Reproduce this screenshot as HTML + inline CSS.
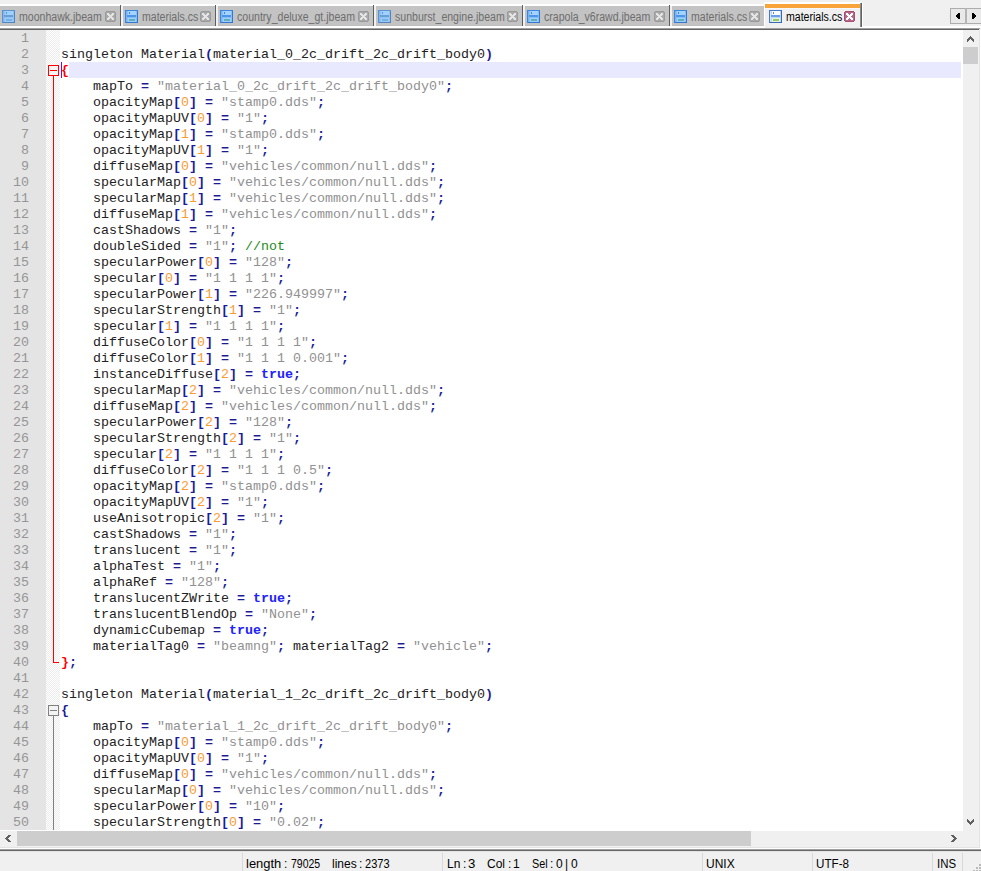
<!DOCTYPE html>
<html><head><meta charset="utf-8">
<style>
*{margin:0;padding:0;box-sizing:border-box}
html,body{width:981px;height:871px;overflow:hidden;background:#f0f0f0;position:relative;font-family:"Liberation Sans",sans-serif}
svg{display:block}
.ic,.cl{position:absolute}
.tt{position:absolute;top:11px;font-size:12px;line-height:13px;color:#6d6d6d;white-space:nowrap;transform:scaleX(0.88);transform-origin:0 0}
.tt.act{color:#000}
#arrows{position:absolute;left:950px;top:8px;width:31px;height:16px}
#editor{position:absolute;left:0;top:30px;width:963px;height:800px;background:#fff;overflow:hidden}
#lnm{position:absolute;left:0;top:0;width:46px;height:800px;background:#e4e4e4}
#lnt{position:absolute;left:0;top:1px;width:29px;font-family:"Liberation Mono",monospace;font-size:13.333px;line-height:16px;color:#969696;text-align:right}
#fold{position:absolute;left:46px;top:0;width:14px;height:800px;background-color:#fff;background-image:conic-gradient(#ececec 25%,#fff 0 50%,#ececec 0 75%,#fff 0);background-size:2px 2px}
#curl{position:absolute;left:69px;top:32px;width:892px;height:16px;background:#e8e8ff}
#caret{position:absolute;left:61px;top:32px;width:1px;height:16px;background:#8000ff}
#code{position:absolute;left:61px;top:1px;width:900px;font-family:"Liberation Mono",monospace;font-size:13.333px;line-height:16px;color:#222;white-space:pre}
.ln{height:16px}
i{font-style:normal}
.o{color:#1c1c96;font-weight:bold}
.s{color:#919191}
.n{color:#ff9a33}
.k{color:#2222ff;font-weight:bold}
.c{color:#1a8c1a}
.b{color:#ff0000;font-weight:bold}
#vsb{position:absolute;left:963px;top:30px;width:16px;height:801px;background:#f0f0f0}
#hsb{position:absolute;left:0;top:831px;width:963px;height:16px;background:#f0f0f0}
#corner{position:absolute;left:963px;top:831px;width:16px;height:16px;background:#f0f0f0}
#status{position:absolute;left:0;top:851px;width:981px;height:20px;background:#f0f0f0;font-size:12px;color:#000}
.sep{position:absolute;top:2px;width:1px;height:18px;background:#d9d9d9}
.st{position:absolute;top:6px;line-height:14px;white-space:pre;transform-origin:0 0}
</style></head><body>
<div id="tabbar">
<div style="position:absolute;left:0px;top:4px;width:764px;height:2px;background:#ffffff;"></div>
<div style="position:absolute;left:0px;top:6px;width:120px;height:20px;background:#c3c3c3;"></div>
<div style="position:absolute;left:0px;top:25px;width:120px;height:1px;background:#bdbdbd;"></div>
<div style="position:absolute;left:120px;top:5px;width:1px;height:21px;background:#5e5e5e;"></div>
<svg class="ic" style="left:2px;top:10px" width="13" height="13" viewBox="0 0 13 13" shape-rendering="crispEdges"><rect x="0" y="0" width="13" height="13" fill="#5a92d2"/><rect x="12" y="1" width="1" height="12" fill="#4e86c4"/><rect x="1" y="12" width="12" height="1" fill="#4e86c4"/><rect x="1" y="1" width="11" height="11" fill="#8fc2f4"/><rect x="1" y="1" width="1" height="11" fill="#80b4ea"/><rect x="3" y="1" width="8" height="4" fill="#a0d0ff"/><rect x="4" y="2" width="1" height="2" fill="#5f95d0"/><rect x="2" y="5" width="9" height="2" fill="#6a9fd2"/><rect x="3" y="8" width="8" height="4" fill="#98ccff"/><rect x="4" y="9" width="6" height="2" fill="#78aee0"/></svg>
<span class="tt" style="left:19px">moonhawk.jbeam</span>
<svg class="cl" style="left:105px;top:11px" width="11" height="11" viewBox="0 0 11 11" shape-rendering="crispEdges"><rect x="1" y="0" width="9" height="1" fill="#9a9a9a"/><rect x="1" y="10" width="9" height="1" fill="#9a9a9a"/><rect x="0" y="1" width="1" height="9" fill="#9a9a9a"/><rect x="10" y="1" width="1" height="9" fill="#9a9a9a"/><rect x="1" y="1" width="9" height="9" fill="#a9a9a9"/><rect x="2" y="2" width="2" height="1" fill="#e4e4e4"/><rect x="7" y="2" width="2" height="1" fill="#e4e4e4"/><rect x="2" y="3" width="3" height="1" fill="#e4e4e4"/><rect x="6" y="3" width="3" height="1" fill="#e4e4e4"/><rect x="3" y="4" width="5" height="1" fill="#e4e4e4"/><rect x="4" y="5" width="3" height="1" fill="#e4e4e4"/><rect x="3" y="6" width="5" height="1" fill="#e4e4e4"/><rect x="2" y="7" width="3" height="1" fill="#e4e4e4"/><rect x="6" y="7" width="3" height="1" fill="#e4e4e4"/><rect x="2" y="8" width="2" height="1" fill="#e4e4e4"/><rect x="7" y="8" width="2" height="1" fill="#e4e4e4"/></svg>
<div style="position:absolute;left:123px;top:6px;width:92px;height:20px;background:#c3c3c3;"></div>
<div style="position:absolute;left:123px;top:25px;width:92px;height:1px;background:#bdbdbd;"></div>
<div style="position:absolute;left:215px;top:5px;width:1px;height:21px;background:#5e5e5e;"></div>
<svg class="ic" style="left:125px;top:10px" width="13" height="13" viewBox="0 0 13 13" shape-rendering="crispEdges"><rect x="0" y="0" width="13" height="13" fill="#3c85e0"/><rect x="12" y="1" width="1" height="12" fill="#3078d4"/><rect x="1" y="12" width="12" height="1" fill="#3078d4"/><rect x="1" y="1" width="11" height="11" fill="#86bff9"/><rect x="1" y="1" width="1" height="11" fill="#7ab4f0"/><rect x="3" y="1" width="8" height="4" fill="#a5d3ff"/><rect x="4" y="2" width="1" height="2" fill="#3c85e0"/><rect x="2" y="5" width="9" height="2" fill="#4f95e6"/><rect x="3" y="8" width="8" height="4" fill="#9ccfff"/><rect x="4" y="9" width="6" height="2" fill="#62aeb3"/></svg>
<span class="tt" style="left:142px">materials.cs</span>
<svg class="cl" style="left:200px;top:11px" width="11" height="11" viewBox="0 0 11 11" shape-rendering="crispEdges"><rect x="1" y="0" width="9" height="1" fill="#9a9a9a"/><rect x="1" y="10" width="9" height="1" fill="#9a9a9a"/><rect x="0" y="1" width="1" height="9" fill="#9a9a9a"/><rect x="10" y="1" width="1" height="9" fill="#9a9a9a"/><rect x="1" y="1" width="9" height="9" fill="#a9a9a9"/><rect x="2" y="2" width="2" height="1" fill="#e4e4e4"/><rect x="7" y="2" width="2" height="1" fill="#e4e4e4"/><rect x="2" y="3" width="3" height="1" fill="#e4e4e4"/><rect x="6" y="3" width="3" height="1" fill="#e4e4e4"/><rect x="3" y="4" width="5" height="1" fill="#e4e4e4"/><rect x="4" y="5" width="3" height="1" fill="#e4e4e4"/><rect x="3" y="6" width="5" height="1" fill="#e4e4e4"/><rect x="2" y="7" width="3" height="1" fill="#e4e4e4"/><rect x="6" y="7" width="3" height="1" fill="#e4e4e4"/><rect x="2" y="8" width="2" height="1" fill="#e4e4e4"/><rect x="7" y="8" width="2" height="1" fill="#e4e4e4"/></svg>
<div style="position:absolute;left:218px;top:6px;width:155px;height:20px;background:#c3c3c3;"></div>
<div style="position:absolute;left:218px;top:25px;width:155px;height:1px;background:#bdbdbd;"></div>
<div style="position:absolute;left:373px;top:5px;width:1px;height:21px;background:#5e5e5e;"></div>
<svg class="ic" style="left:220px;top:10px" width="13" height="13" viewBox="0 0 13 13" shape-rendering="crispEdges"><rect x="0" y="0" width="13" height="13" fill="#3c85e0"/><rect x="12" y="1" width="1" height="12" fill="#3078d4"/><rect x="1" y="12" width="12" height="1" fill="#3078d4"/><rect x="1" y="1" width="11" height="11" fill="#86bff9"/><rect x="1" y="1" width="1" height="11" fill="#7ab4f0"/><rect x="3" y="1" width="8" height="4" fill="#a5d3ff"/><rect x="4" y="2" width="1" height="2" fill="#3c85e0"/><rect x="2" y="5" width="9" height="2" fill="#4f95e6"/><rect x="3" y="8" width="8" height="4" fill="#9ccfff"/><rect x="4" y="9" width="6" height="2" fill="#62aeb3"/></svg>
<span class="tt" style="left:237px">country_deluxe_gt.jbeam</span>
<svg class="cl" style="left:358px;top:11px" width="11" height="11" viewBox="0 0 11 11" shape-rendering="crispEdges"><rect x="1" y="0" width="9" height="1" fill="#9a9a9a"/><rect x="1" y="10" width="9" height="1" fill="#9a9a9a"/><rect x="0" y="1" width="1" height="9" fill="#9a9a9a"/><rect x="10" y="1" width="1" height="9" fill="#9a9a9a"/><rect x="1" y="1" width="9" height="9" fill="#a9a9a9"/><rect x="2" y="2" width="2" height="1" fill="#e4e4e4"/><rect x="7" y="2" width="2" height="1" fill="#e4e4e4"/><rect x="2" y="3" width="3" height="1" fill="#e4e4e4"/><rect x="6" y="3" width="3" height="1" fill="#e4e4e4"/><rect x="3" y="4" width="5" height="1" fill="#e4e4e4"/><rect x="4" y="5" width="3" height="1" fill="#e4e4e4"/><rect x="3" y="6" width="5" height="1" fill="#e4e4e4"/><rect x="2" y="7" width="3" height="1" fill="#e4e4e4"/><rect x="6" y="7" width="3" height="1" fill="#e4e4e4"/><rect x="2" y="8" width="2" height="1" fill="#e4e4e4"/><rect x="7" y="8" width="2" height="1" fill="#e4e4e4"/></svg>
<div style="position:absolute;left:376px;top:6px;width:146px;height:20px;background:#c3c3c3;"></div>
<div style="position:absolute;left:376px;top:25px;width:146px;height:1px;background:#bdbdbd;"></div>
<div style="position:absolute;left:522px;top:5px;width:1px;height:21px;background:#5e5e5e;"></div>
<svg class="ic" style="left:378px;top:10px" width="13" height="13" viewBox="0 0 13 13" shape-rendering="crispEdges"><rect x="0" y="0" width="13" height="13" fill="#5a92d2"/><rect x="12" y="1" width="1" height="12" fill="#4e86c4"/><rect x="1" y="12" width="12" height="1" fill="#4e86c4"/><rect x="1" y="1" width="11" height="11" fill="#8fc2f4"/><rect x="1" y="1" width="1" height="11" fill="#80b4ea"/><rect x="3" y="1" width="8" height="4" fill="#a0d0ff"/><rect x="4" y="2" width="1" height="2" fill="#5f95d0"/><rect x="2" y="5" width="9" height="2" fill="#6a9fd2"/><rect x="3" y="8" width="8" height="4" fill="#98ccff"/><rect x="4" y="9" width="6" height="2" fill="#78aee0"/></svg>
<span class="tt" style="left:395px">sunburst_engine.jbeam</span>
<svg class="cl" style="left:507px;top:11px" width="11" height="11" viewBox="0 0 11 11" shape-rendering="crispEdges"><rect x="1" y="0" width="9" height="1" fill="#9a9a9a"/><rect x="1" y="10" width="9" height="1" fill="#9a9a9a"/><rect x="0" y="1" width="1" height="9" fill="#9a9a9a"/><rect x="10" y="1" width="1" height="9" fill="#9a9a9a"/><rect x="1" y="1" width="9" height="9" fill="#a9a9a9"/><rect x="2" y="2" width="2" height="1" fill="#e4e4e4"/><rect x="7" y="2" width="2" height="1" fill="#e4e4e4"/><rect x="2" y="3" width="3" height="1" fill="#e4e4e4"/><rect x="6" y="3" width="3" height="1" fill="#e4e4e4"/><rect x="3" y="4" width="5" height="1" fill="#e4e4e4"/><rect x="4" y="5" width="3" height="1" fill="#e4e4e4"/><rect x="3" y="6" width="5" height="1" fill="#e4e4e4"/><rect x="2" y="7" width="3" height="1" fill="#e4e4e4"/><rect x="6" y="7" width="3" height="1" fill="#e4e4e4"/><rect x="2" y="8" width="2" height="1" fill="#e4e4e4"/><rect x="7" y="8" width="2" height="1" fill="#e4e4e4"/></svg>
<div style="position:absolute;left:525px;top:6px;width:144px;height:20px;background:#c3c3c3;"></div>
<div style="position:absolute;left:525px;top:25px;width:144px;height:1px;background:#bdbdbd;"></div>
<div style="position:absolute;left:669px;top:5px;width:1px;height:21px;background:#5e5e5e;"></div>
<svg class="ic" style="left:527px;top:10px" width="13" height="13" viewBox="0 0 13 13" shape-rendering="crispEdges"><rect x="0" y="0" width="13" height="13" fill="#3c85e0"/><rect x="12" y="1" width="1" height="12" fill="#3078d4"/><rect x="1" y="12" width="12" height="1" fill="#3078d4"/><rect x="1" y="1" width="11" height="11" fill="#86bff9"/><rect x="1" y="1" width="1" height="11" fill="#7ab4f0"/><rect x="3" y="1" width="8" height="4" fill="#a5d3ff"/><rect x="4" y="2" width="1" height="2" fill="#3c85e0"/><rect x="2" y="5" width="9" height="2" fill="#4f95e6"/><rect x="3" y="8" width="8" height="4" fill="#9ccfff"/><rect x="4" y="9" width="6" height="2" fill="#62aeb3"/></svg>
<span class="tt" style="left:544px">crapola_v6rawd.jbeam</span>
<svg class="cl" style="left:654px;top:11px" width="11" height="11" viewBox="0 0 11 11" shape-rendering="crispEdges"><rect x="1" y="0" width="9" height="1" fill="#9a9a9a"/><rect x="1" y="10" width="9" height="1" fill="#9a9a9a"/><rect x="0" y="1" width="1" height="9" fill="#9a9a9a"/><rect x="10" y="1" width="1" height="9" fill="#9a9a9a"/><rect x="1" y="1" width="9" height="9" fill="#a9a9a9"/><rect x="2" y="2" width="2" height="1" fill="#e4e4e4"/><rect x="7" y="2" width="2" height="1" fill="#e4e4e4"/><rect x="2" y="3" width="3" height="1" fill="#e4e4e4"/><rect x="6" y="3" width="3" height="1" fill="#e4e4e4"/><rect x="3" y="4" width="5" height="1" fill="#e4e4e4"/><rect x="4" y="5" width="3" height="1" fill="#e4e4e4"/><rect x="3" y="6" width="5" height="1" fill="#e4e4e4"/><rect x="2" y="7" width="3" height="1" fill="#e4e4e4"/><rect x="6" y="7" width="3" height="1" fill="#e4e4e4"/><rect x="2" y="8" width="2" height="1" fill="#e4e4e4"/><rect x="7" y="8" width="2" height="1" fill="#e4e4e4"/></svg>
<div style="position:absolute;left:672px;top:6px;width:92px;height:20px;background:#c3c3c3;"></div>
<div style="position:absolute;left:672px;top:25px;width:92px;height:1px;background:#bdbdbd;"></div>
<div style="position:absolute;left:764px;top:5px;width:1px;height:21px;background:#5e5e5e;"></div>
<svg class="ic" style="left:674px;top:10px" width="13" height="13" viewBox="0 0 13 13" shape-rendering="crispEdges"><rect x="0" y="0" width="13" height="13" fill="#3c85e0"/><rect x="12" y="1" width="1" height="12" fill="#3078d4"/><rect x="1" y="12" width="12" height="1" fill="#3078d4"/><rect x="1" y="1" width="11" height="11" fill="#86bff9"/><rect x="1" y="1" width="1" height="11" fill="#7ab4f0"/><rect x="3" y="1" width="8" height="4" fill="#a5d3ff"/><rect x="4" y="2" width="1" height="2" fill="#3c85e0"/><rect x="2" y="5" width="9" height="2" fill="#4f95e6"/><rect x="3" y="8" width="8" height="4" fill="#9ccfff"/><rect x="4" y="9" width="6" height="2" fill="#62aeb3"/></svg>
<span class="tt" style="left:691px">materials.cs</span>
<svg class="cl" style="left:749px;top:11px" width="11" height="11" viewBox="0 0 11 11" shape-rendering="crispEdges"><rect x="1" y="0" width="9" height="1" fill="#9a9a9a"/><rect x="1" y="10" width="9" height="1" fill="#9a9a9a"/><rect x="0" y="1" width="1" height="9" fill="#9a9a9a"/><rect x="10" y="1" width="1" height="9" fill="#9a9a9a"/><rect x="1" y="1" width="9" height="9" fill="#a9a9a9"/><rect x="2" y="2" width="2" height="1" fill="#e4e4e4"/><rect x="7" y="2" width="2" height="1" fill="#e4e4e4"/><rect x="2" y="3" width="3" height="1" fill="#e4e4e4"/><rect x="6" y="3" width="3" height="1" fill="#e4e4e4"/><rect x="3" y="4" width="5" height="1" fill="#e4e4e4"/><rect x="4" y="5" width="3" height="1" fill="#e4e4e4"/><rect x="3" y="6" width="5" height="1" fill="#e4e4e4"/><rect x="2" y="7" width="3" height="1" fill="#e4e4e4"/><rect x="6" y="7" width="3" height="1" fill="#e4e4e4"/><rect x="2" y="8" width="2" height="1" fill="#e4e4e4"/><rect x="7" y="8" width="2" height="1" fill="#e4e4e4"/></svg>
<div style="position:absolute;left:0px;top:26px;width:981px;height:2px;background:#ffffff;"></div>
<div style="position:absolute;left:764px;top:2px;width:97px;height:2px;background:#ffffff;"></div>
<div style="position:absolute;left:764px;top:2px;width:1px;height:26px;background:#ffffff;"></div>
<div style="position:absolute;left:765px;top:4px;width:95px;height:4px;background:#f9a43a;"></div>
<div style="position:absolute;left:765px;top:8px;width:95px;height:1px;background:#f4f8fc;"></div>
<div style="position:absolute;left:765px;top:9px;width:95px;height:19px;background:#f0f0f0;"></div>
<div style="position:absolute;left:860px;top:3px;width:1px;height:24px;background:#8c8c8c;"></div>
<div style="position:absolute;left:861px;top:3px;width:1px;height:24px;background:#626262;"></div>
<div style="position:absolute;left:862px;top:3px;width:1px;height:24px;background:#ffffff;"></div>
<svg class="ic" style="left:769px;top:10px" width="13" height="13" viewBox="0 0 13 13" shape-rendering="crispEdges"><rect x="0" y="0" width="13" height="13" fill="#4a78c6"/><rect x="12" y="1" width="1" height="12" fill="#3a68b8"/><rect x="1" y="12" width="12" height="1" fill="#3a68b8"/><rect x="1" y="1" width="11" height="11" fill="#c0d8f6"/><rect x="1" y="1" width="1" height="11" fill="#d8e8fc"/><rect x="3" y="1" width="8" height="4" fill="#ffffff"/><rect x="4" y="2" width="1" height="2" fill="#5a88d0"/><rect x="2" y="5" width="9" height="2" fill="#6ea0e8"/><rect x="3" y="8" width="8" height="4" fill="#e6f4d8"/><rect x="4" y="9" width="6" height="2" fill="#92c870"/></svg>
<span class="tt act" style="left:786px">materials.cs</span>
<svg class="cl" style="left:844px;top:11px" width="11" height="11" viewBox="0 0 11 11" shape-rendering="crispEdges"><rect x="1" y="0" width="9" height="1" fill="#a65070"/><rect x="1" y="10" width="9" height="1" fill="#a65070"/><rect x="0" y="1" width="1" height="9" fill="#a65070"/><rect x="10" y="1" width="1" height="9" fill="#a65070"/><rect x="1" y="1" width="9" height="9" fill="#b8688a"/><rect x="2" y="2" width="2" height="1" fill="#ffffff"/><rect x="7" y="2" width="2" height="1" fill="#ffffff"/><rect x="2" y="3" width="3" height="1" fill="#ffffff"/><rect x="6" y="3" width="3" height="1" fill="#ffffff"/><rect x="3" y="4" width="5" height="1" fill="#ffffff"/><rect x="4" y="5" width="3" height="1" fill="#ffffff"/><rect x="3" y="6" width="5" height="1" fill="#ffffff"/><rect x="2" y="7" width="3" height="1" fill="#ffffff"/><rect x="6" y="7" width="3" height="1" fill="#ffffff"/><rect x="2" y="8" width="2" height="1" fill="#ffffff"/><rect x="7" y="8" width="2" height="1" fill="#ffffff"/></svg>
<div id="arrows">
<svg width="31" height="16" viewBox="0 0 31 16" shape-rendering="crispEdges">
<rect x="0.5" y="0.5" width="15" height="15" fill="#e9e9e9" stroke="#adadad"/>
<rect x="16.5" y="0.5" width="15" height="15" fill="#e9e9e9" stroke="#adadad"/>
<rect x="15" y="0" width="2" height="16" fill="#b4b4b4"/>
</svg>
<svg width="31" height="16" viewBox="0 0 31 16" shape-rendering="crispEdges" style="position:absolute;left:0;top:0">
<rect x="6" y="7" width="1" height="2" fill="#000"/><rect x="7" y="6" width="1" height="4" fill="#000"/><rect x="8" y="5" width="2" height="6" fill="#000"/><rect x="22" y="5" width="2" height="6" fill="#000"/><rect x="24" y="6" width="1" height="4" fill="#000"/><rect x="25" y="7" width="1" height="2" fill="#000"/>
</svg>
</div>
</div>
<div style="position:absolute;left:0px;top:28px;width:980px;height:1px;background:#a0a0a0;"></div>
<div style="position:absolute;left:0px;top:29px;width:979px;height:1px;background:#646464;"></div>
<div id="editor">
<div id="lnm"><div id="lnt"><div>1</div><div>2</div><div>3</div><div>4</div><div>5</div><div>6</div><div>7</div><div>8</div><div>9</div><div>10</div><div>11</div><div>12</div><div>13</div><div>14</div><div>15</div><div>16</div><div>17</div><div>18</div><div>19</div><div>20</div><div>21</div><div>22</div><div>23</div><div>24</div><div>25</div><div>26</div><div>27</div><div>28</div><div>29</div><div>30</div><div>31</div><div>32</div><div>33</div><div>34</div><div>35</div><div>36</div><div>37</div><div>38</div><div>39</div><div>40</div><div>41</div><div>42</div><div>43</div><div>44</div><div>45</div><div>46</div><div>47</div><div>48</div><div>49</div><div>50</div></div></div>
<div id="fold">
<svg width="14" height="800" viewBox="0 0 14 800" shape-rendering="crispEdges" style="position:absolute;left:0;top:0">
<rect x="2.5" y="35.5" width="10" height="10" fill="#f3f3f3" stroke="#ff0000"/>
<path d="M4 40.5h7" stroke="#ff0000"/>
<path d="M7.5 46V632.5H13" stroke="#ff0000" fill="none"/>
<rect x="2.5" y="675.5" width="10" height="10" fill="#f3f3f3" stroke="#808080"/>
<path d="M4 680.5h7" stroke="#808080"/>
<path d="M7.5 686V800" stroke="#808080" fill="none"/>
</svg>
</div>
<div id="curl"></div>
<div id="caret"></div>
<div id="code"><div class="ln"></div><div class="ln">singleton Material<i class="o">(</i>material_0_2c_drift_2c_drift_body0<i class="o">)</i></div><div class="ln"><i class="b">{</i></div><div class="ln">    mapTo <i class="o">=</i> <i class="s">&quot;material_0_2c_drift_2c_drift_body0&quot;</i><i class="o">;</i></div><div class="ln">    opacityMap<i class="o">[</i><i class="n">0</i><i class="o">]</i> <i class="o">=</i> <i class="s">&quot;stamp0.dds&quot;</i><i class="o">;</i></div><div class="ln">    opacityMapUV<i class="o">[</i><i class="n">0</i><i class="o">]</i> <i class="o">=</i> <i class="s">&quot;1&quot;</i><i class="o">;</i></div><div class="ln">    opacityMap<i class="o">[</i><i class="n">1</i><i class="o">]</i> <i class="o">=</i> <i class="s">&quot;stamp0.dds&quot;</i><i class="o">;</i></div><div class="ln">    opacityMapUV<i class="o">[</i><i class="n">1</i><i class="o">]</i> <i class="o">=</i> <i class="s">&quot;1&quot;</i><i class="o">;</i></div><div class="ln">    diffuseMap<i class="o">[</i><i class="n">0</i><i class="o">]</i> <i class="o">=</i> <i class="s">&quot;vehicles/common/null.dds&quot;</i><i class="o">;</i></div><div class="ln">    specularMap<i class="o">[</i><i class="n">0</i><i class="o">]</i> <i class="o">=</i> <i class="s">&quot;vehicles/common/null.dds&quot;</i><i class="o">;</i></div><div class="ln">    specularMap<i class="o">[</i><i class="n">1</i><i class="o">]</i> <i class="o">=</i> <i class="s">&quot;vehicles/common/null.dds&quot;</i><i class="o">;</i></div><div class="ln">    diffuseMap<i class="o">[</i><i class="n">1</i><i class="o">]</i> <i class="o">=</i> <i class="s">&quot;vehicles/common/null.dds&quot;</i><i class="o">;</i></div><div class="ln">    castShadows <i class="o">=</i> <i class="s">&quot;1&quot;</i><i class="o">;</i></div><div class="ln">    doubleSided <i class="o">=</i> <i class="s">&quot;1&quot;</i><i class="o">;</i> <i class="c">//not</i></div><div class="ln">    specularPower<i class="o">[</i><i class="n">0</i><i class="o">]</i> <i class="o">=</i> <i class="s">&quot;128&quot;</i><i class="o">;</i></div><div class="ln">    specular<i class="o">[</i><i class="n">0</i><i class="o">]</i> <i class="o">=</i> <i class="s">&quot;1 1 1 1&quot;</i><i class="o">;</i></div><div class="ln">    specularPower<i class="o">[</i><i class="n">1</i><i class="o">]</i> <i class="o">=</i> <i class="s">&quot;226.949997&quot;</i><i class="o">;</i></div><div class="ln">    specularStrength<i class="o">[</i><i class="n">1</i><i class="o">]</i> <i class="o">=</i> <i class="s">&quot;1&quot;</i><i class="o">;</i></div><div class="ln">    specular<i class="o">[</i><i class="n">1</i><i class="o">]</i> <i class="o">=</i> <i class="s">&quot;1 1 1 1&quot;</i><i class="o">;</i></div><div class="ln">    diffuseColor<i class="o">[</i><i class="n">0</i><i class="o">]</i> <i class="o">=</i> <i class="s">&quot;1 1 1 1&quot;</i><i class="o">;</i></div><div class="ln">    diffuseColor<i class="o">[</i><i class="n">1</i><i class="o">]</i> <i class="o">=</i> <i class="s">&quot;1 1 1 0.001&quot;</i><i class="o">;</i></div><div class="ln">    instanceDiffuse<i class="o">[</i><i class="n">2</i><i class="o">]</i> <i class="o">=</i> <i class="k">true</i><i class="o">;</i></div><div class="ln">    specularMap<i class="o">[</i><i class="n">2</i><i class="o">]</i> <i class="o">=</i> <i class="s">&quot;vehicles/common/null.dds&quot;</i><i class="o">;</i></div><div class="ln">    diffuseMap<i class="o">[</i><i class="n">2</i><i class="o">]</i> <i class="o">=</i> <i class="s">&quot;vehicles/common/null.dds&quot;</i><i class="o">;</i></div><div class="ln">    specularPower<i class="o">[</i><i class="n">2</i><i class="o">]</i> <i class="o">=</i> <i class="s">&quot;128&quot;</i><i class="o">;</i></div><div class="ln">    specularStrength<i class="o">[</i><i class="n">2</i><i class="o">]</i> <i class="o">=</i> <i class="s">&quot;1&quot;</i><i class="o">;</i></div><div class="ln">    specular<i class="o">[</i><i class="n">2</i><i class="o">]</i> <i class="o">=</i> <i class="s">&quot;1 1 1 1&quot;</i><i class="o">;</i></div><div class="ln">    diffuseColor<i class="o">[</i><i class="n">2</i><i class="o">]</i> <i class="o">=</i> <i class="s">&quot;1 1 1 0.5&quot;</i><i class="o">;</i></div><div class="ln">    opacityMap<i class="o">[</i><i class="n">2</i><i class="o">]</i> <i class="o">=</i> <i class="s">&quot;stamp0.dds&quot;</i><i class="o">;</i></div><div class="ln">    opacityMapUV<i class="o">[</i><i class="n">2</i><i class="o">]</i> <i class="o">=</i> <i class="s">&quot;1&quot;</i><i class="o">;</i></div><div class="ln">    useAnisotropic<i class="o">[</i><i class="n">2</i><i class="o">]</i> <i class="o">=</i> <i class="s">&quot;1&quot;</i><i class="o">;</i></div><div class="ln">    castShadows <i class="o">=</i> <i class="s">&quot;1&quot;</i><i class="o">;</i></div><div class="ln">    translucent <i class="o">=</i> <i class="s">&quot;1&quot;</i><i class="o">;</i></div><div class="ln">    alphaTest <i class="o">=</i> <i class="s">&quot;1&quot;</i><i class="o">;</i></div><div class="ln">    alphaRef <i class="o">=</i> <i class="s">&quot;128&quot;</i><i class="o">;</i></div><div class="ln">    translucentZWrite <i class="o">=</i> <i class="k">true</i><i class="o">;</i></div><div class="ln">    translucentBlendOp <i class="o">=</i> <i class="s">&quot;None&quot;</i><i class="o">;</i></div><div class="ln">    dynamicCubemap <i class="o">=</i> <i class="k">true</i><i class="o">;</i></div><div class="ln">    materialTag0 <i class="o">=</i> <i class="s">&quot;beamng&quot;</i><i class="o">;</i> materialTag2 <i class="o">=</i> <i class="s">&quot;vehicle&quot;</i><i class="o">;</i></div><div class="ln"><i class="b">}</i><i class="o">;</i></div><div class="ln"></div><div class="ln">singleton Material<i class="o">(</i>material_1_2c_drift_2c_drift_body0<i class="o">)</i></div><div class="ln"><i class="o">{</i></div><div class="ln">    mapTo <i class="o">=</i> <i class="s">&quot;material_1_2c_drift_2c_drift_body0&quot;</i><i class="o">;</i></div><div class="ln">    opacityMap<i class="o">[</i><i class="n">0</i><i class="o">]</i> <i class="o">=</i> <i class="s">&quot;stamp0.dds&quot;</i><i class="o">;</i></div><div class="ln">    opacityMapUV<i class="o">[</i><i class="n">0</i><i class="o">]</i> <i class="o">=</i> <i class="s">&quot;1&quot;</i><i class="o">;</i></div><div class="ln">    diffuseMap<i class="o">[</i><i class="n">0</i><i class="o">]</i> <i class="o">=</i> <i class="s">&quot;vehicles/common/null.dds&quot;</i><i class="o">;</i></div><div class="ln">    specularMap<i class="o">[</i><i class="n">0</i><i class="o">]</i> <i class="o">=</i> <i class="s">&quot;vehicles/common/null.dds&quot;</i><i class="o">;</i></div><div class="ln">    specularPower<i class="o">[</i><i class="n">0</i><i class="o">]</i> <i class="o">=</i> <i class="s">&quot;10&quot;</i><i class="o">;</i></div><div class="ln">    specularStrength<i class="o">[</i><i class="n">0</i><i class="o">]</i> <i class="o">=</i> <i class="s">&quot;0.02&quot;</i><i class="o">;</i></div></div>
</div>
<div id="vsb">
<svg width="16" height="801" viewBox="0 0 16 801" shape-rendering="crispEdges" style="position:absolute;left:0;top:0">
<rect x="4" y="9" width="1" height="3" fill="#606060"/><rect x="5" y="8" width="1" height="3" fill="#606060"/><rect x="6" y="7" width="1" height="3" fill="#606060"/><rect x="7" y="6" width="1" height="3" fill="#606060"/><rect x="8" y="7" width="1" height="3" fill="#606060"/><rect x="9" y="8" width="1" height="3" fill="#606060"/><rect x="10" y="9" width="1" height="3" fill="#606060"/>
<rect x="0" y="17" width="15" height="17" fill="#cdcdcd"/>
<rect x="4" y="789" width="1" height="3" fill="#606060"/><rect x="5" y="790" width="1" height="3" fill="#606060"/><rect x="6" y="791" width="1" height="3" fill="#606060"/><rect x="7" y="792" width="1" height="3" fill="#606060"/><rect x="8" y="791" width="1" height="3" fill="#606060"/><rect x="9" y="790" width="1" height="3" fill="#606060"/><rect x="10" y="789" width="1" height="3" fill="#606060"/>
</svg>
</div>
<div id="hsb">
<svg width="963" height="16" viewBox="0 0 963 16" shape-rendering="crispEdges" style="position:absolute;left:0;top:0">
<rect x="8" y="4" width="3" height="1" fill="#606060"/><rect x="7" y="5" width="3" height="1" fill="#606060"/><rect x="6" y="6" width="3" height="1" fill="#606060"/><rect x="5" y="7" width="3" height="1" fill="#606060"/><rect x="6" y="8" width="3" height="1" fill="#606060"/><rect x="7" y="9" width="3" height="1" fill="#606060"/><rect x="8" y="10" width="3" height="1" fill="#606060"/>
<rect x="17" y="0" width="734" height="15" fill="#cdcdcd"/>
<rect x="951" y="4" width="3" height="1" fill="#606060"/><rect x="952" y="5" width="3" height="1" fill="#606060"/><rect x="953" y="6" width="3" height="1" fill="#606060"/><rect x="954" y="7" width="3" height="1" fill="#606060"/><rect x="953" y="8" width="3" height="1" fill="#606060"/><rect x="952" y="9" width="3" height="1" fill="#606060"/><rect x="951" y="10" width="3" height="1" fill="#606060"/>
</svg>
</div>
<div id="corner"></div>
<div style="position:absolute;left:0px;top:830px;width:963px;height:1px;background:#ffffff;"></div>
<div style="position:absolute;left:979px;top:30px;width:1px;height:818px;background:#e3e3e3;"></div>
<div style="position:absolute;left:980px;top:30px;width:1px;height:818px;background:#ffffff;"></div>
<div style="position:absolute;left:0px;top:846px;width:979px;height:1px;background:#f0f0f0;"></div>
<div style="position:absolute;left:0px;top:847px;width:980px;height:1px;background:#e3e3e3;"></div>
<div style="position:absolute;left:0px;top:848px;width:981px;height:1px;background:#ffffff;"></div>
<div style="position:absolute;left:0px;top:849px;width:981px;height:1px;background:#a0a0a0;"></div>
<div style="position:absolute;left:0px;top:850px;width:981px;height:1px;background:#696969;"></div>
<div id="status">
<div style="position:absolute;left:0px;top:0px;width:981px;height:1px;background:#e3e3e3;"></div>
<div class="sep" style="left:242px"></div>
<div class="sep" style="left:442px"></div>
<div class="sep" style="left:702px"></div>
<div class="sep" style="left:812px"></div>
<div class="sep" style="left:932px"></div>
<div class="st" style="left:246px;transform:scaleX(1.08)">length</div>
<div class="st" style="left:284px">:</div>
<div class="st" style="left:291px;transform:scaleX(0.875)">79025</div>
<div class="st" style="left:332px">lines</div>
<div class="st" style="left:359px">:</div>
<div class="st" style="left:365px;transform:scaleX(0.92)">2373</div>
<div class="st" style="left:447px">Ln</div>
<div class="st" style="left:463px">:</div>
<div class="st" style="left:468px;transform:scaleX(1.1)">3</div>
<div class="st" style="left:487px">Col</div>
<div class="st" style="left:508px">:</div>
<div class="st" style="left:513px">1</div>
<div class="st" style="left:532px;transform:scaleX(0.9)">Sel</div>
<div class="st" style="left:550px">:</div>
<div class="st" style="left:556px">0</div>
<div class="st" style="left:565px">|</div>
<div class="st" style="left:571px">0</div>
<div class="st" style="left:706px">UNIX</div>
<div class="st" style="left:816px;transform:scaleX(0.97)">UTF-8</div>
<div class="st" style="left:937px;transform:scaleX(0.95)">INS</div>
<div class="sep" style="left:962px"></div>
<div style="position:absolute;left:979px;top:13px;width:2px;height:2px;background:#bababa;"></div><div style="position:absolute;left:976px;top:16px;width:2px;height:2px;background:#bababa;"></div><div style="position:absolute;left:979px;top:16px;width:2px;height:2px;background:#bababa;"></div><div style="position:absolute;left:973px;top:19px;width:2px;height:2px;background:#bababa;"></div><div style="position:absolute;left:976px;top:19px;width:2px;height:2px;background:#bababa;"></div><div style="position:absolute;left:979px;top:19px;width:2px;height:2px;background:#bababa;"></div>
</div>
</body></html>
